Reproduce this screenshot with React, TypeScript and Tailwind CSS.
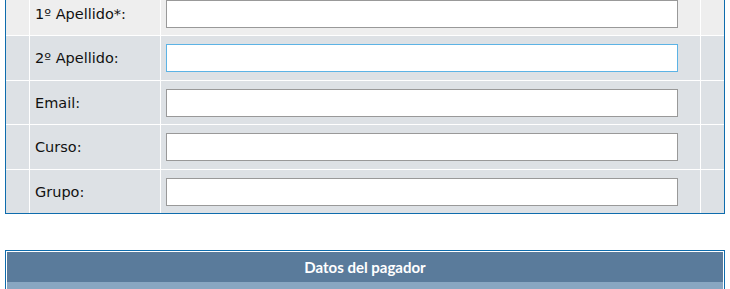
import React from "react";

const rows = [
  { label: "1º Apellido*:", h: "h-[43px]", bg: "bg-[#eeeeee]", focus: false },
  { label: "2º Apellido:", h: "h-[44px]", bg: "bg-[#dde1e5]", focus: true },
  { label: "Email:", h: "h-[43px]", bg: "bg-[#dde1e5]", focus: false },
  { label: "Curso:", h: "h-[44px]", bg: "bg-[#dde1e5]", focus: false },
  { label: "Grupo:", h: "h-[43px]", bg: "bg-[#dde1e5]", focus: false },
];

export default function App() {
  return (
    <div className="w-[730px] h-[289px] overflow-hidden bg-white font-['DejaVu_Sans',sans-serif]">
      <div className="ml-[5px] mt-[-8px] w-[720px] border-x border-b border-[#0e6cad] bg-white">
        <div className="flex flex-col gap-px">
          {rows.map((r) => (
            <div key={r.label} className={`flex gap-px ${r.h}`}>
              <div className={`w-[23px] ${r.bg}`} />
              <div className={`w-[130px] ${r.bg} flex items-center pl-[5px] pt-[2px] text-[14.5px] text-[#111]`}>
                {r.label}
              </div>
              <div className={`w-[539px] ${r.bg} flex items-center pl-[5px]`}>
                <input
                  className={`w-[512px] h-[28px] bg-white border outline-none ${
                    r.focus ? "border-[#5cb3e5]" : "border-[#999999]"
                  }`}
                />
              </div>
              <div className={`w-[23px] ${r.bg}`} />
            </div>
          ))}
        </div>
      </div>
      <div className="ml-[5px] mt-[36px] w-[720px] border border-[#0e6cad] bg-white p-px">
        <div className="h-[30px] bg-[#5a7b9b] flex items-center justify-center text-white font-bold text-[15px] font-['Lato',sans-serif]">
          Datos del pagador
        </div>
        <div className="h-[7px] bg-[#88a6c1]" />
      </div>
    </div>
  );
}
